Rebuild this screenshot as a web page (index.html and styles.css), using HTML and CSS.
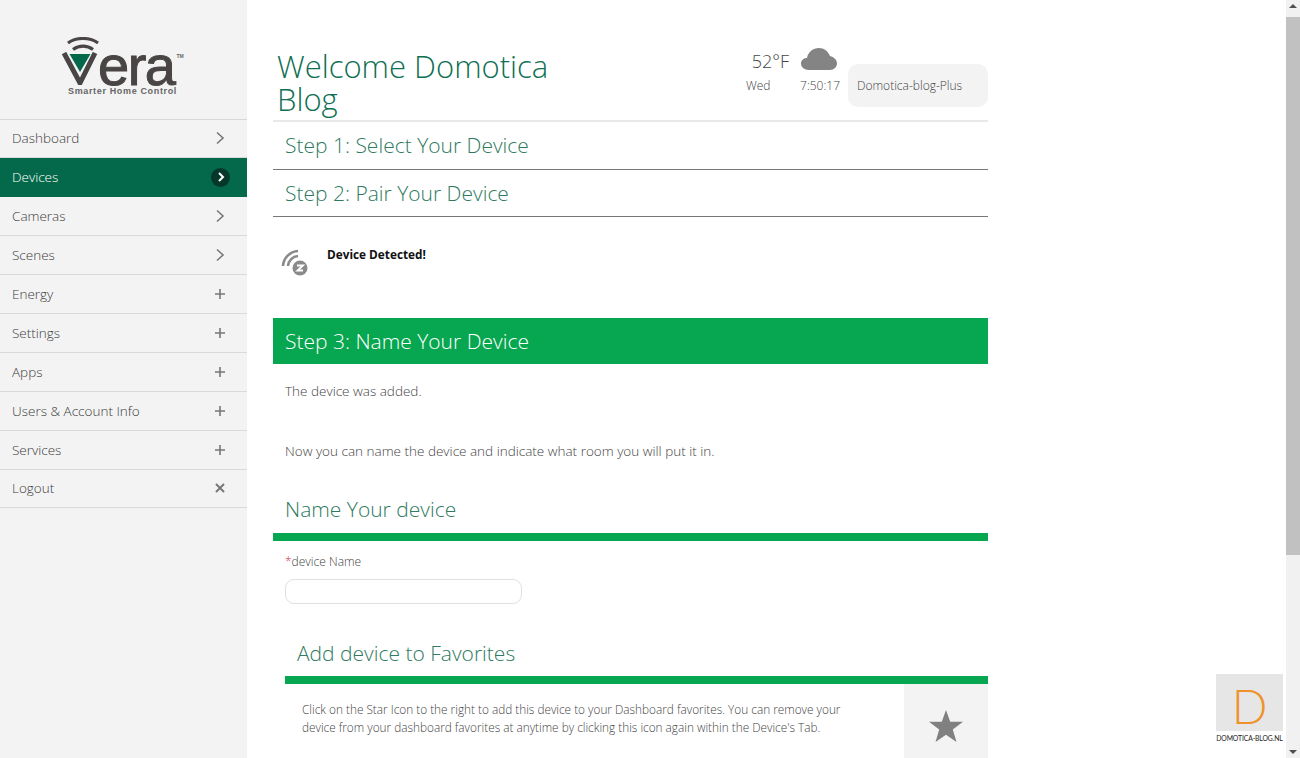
FILE: index.html
```html
<!DOCTYPE html>
<html lang="en">
<head>
<meta charset="utf-8">
<title>Vera</title>
<link rel="stylesheet" href="styles.css">
</head>
<body>
<div class="app">
  <aside class="sidebar">
    <div class="logo">
      <div class="logo-mark">
        <svg class="logo-waves" width="34" height="15" viewBox="0 0 34 15"><path d="M2 6C10 0 24 0 32 6" fill="none" stroke="#4a4545" stroke-width="3.2"/><path d="M7 12.500C13 8 21 8 27 12.500" fill="none" stroke="#4a4545" stroke-width="3.2"/></svg>
        <div class="logo-word">
          <svg class="logo-v" width="38" height="33" viewBox="0 0 38 33"><path d="M3 1L19 31L34 1" fill="none" stroke="#4a4545" stroke-width="5"/><path d="M8.500 2H29.500L19 20Z" fill="#04694a"/></svg>
          <span class="logo-text">era</span><span class="logo-tm">TM</span>
        </div>
        <div class="logo-sub">Smarter Home Control</div>
      </div>
    </div>
    <nav class="menu">
      <a class="menu-item"><span>Dashboard</span><svg width="10" height="14" viewBox="0 0 10 14"><path d="M2 1.500L8 7L2 12.500" fill="none" stroke="#777" stroke-width="1.600"/></svg></a>
      <a class="menu-item active"><span>Devices</span><span class="badge"><svg width="8" height="10" viewBox="0 0 8 10"><path d="M2 1L6 5L2 9" fill="none" stroke="#fff" stroke-width="2"/></svg></span></a>
      <a class="menu-item"><span>Cameras</span><svg width="10" height="14" viewBox="0 0 10 14"><path d="M2 1.500L8 7L2 12.500" fill="none" stroke="#777" stroke-width="1.600"/></svg></a>
      <a class="menu-item"><span>Scenes</span><svg width="10" height="14" viewBox="0 0 10 14"><path d="M2 1.500L8 7L2 12.500" fill="none" stroke="#777" stroke-width="1.600"/></svg></a>
      <a class="menu-item"><span>Energy</span><svg width="10" height="10" viewBox="0 0 10 10"><path d="M5 0V10M0 5H10" stroke="#777" stroke-width="1.600"/></svg></a>
      <a class="menu-item"><span>Settings</span><svg width="10" height="10" viewBox="0 0 10 10"><path d="M5 0V10M0 5H10" stroke="#777" stroke-width="1.600"/></svg></a>
      <a class="menu-item"><span>Apps</span><svg width="10" height="10" viewBox="0 0 10 10"><path d="M5 0V10M0 5H10" stroke="#777" stroke-width="1.600"/></svg></a>
      <a class="menu-item"><span>Users &amp; Account Info</span><svg width="10" height="10" viewBox="0 0 10 10"><path d="M5 0V10M0 5H10" stroke="#777" stroke-width="1.600"/></svg></a>
      <a class="menu-item"><span>Services</span><svg width="10" height="10" viewBox="0 0 10 10"><path d="M5 0V10M0 5H10" stroke="#777" stroke-width="1.600"/></svg></a>
      <a class="menu-item"><span>Logout</span><svg width="10" height="10" viewBox="0 0 10 10"><path d="M1 1L9 9M9 1L1 9" stroke="#777" stroke-width="2"/></svg></a>
    </nav>
  </aside>

  <main class="content">
    <header class="header">
      <h1 class="welcome">Welcome Domotica Blog</h1>
      <div class="status">
        <div class="weather">
          <div class="weather-top">
            <span class="temp">52°F</span>
            <svg width="36" height="24" viewBox="0 0 36 24"><path d="M8 23C3 23 0 20 0 16.500C0 13 3 11 6 11C7 5 12 1 18 1C23 1 27 4 29 9C33 10 36 13 36 16.500C36 20 33 23 29 23Z" fill="#848484"/></svg>
          </div>
          <div class="weather-bottom"><span>Wed</span><span>7:50:17</span></div>
        </div>
        <div class="unit-name">Domotica-blog-Plus</div>
      </div>
    </header>

    <h2 class="step">Step 1: Select Your Device</h2>
    <h2 class="step">Step 2: Pair Your Device</h2>

    <div class="detected">
      <svg width="28" height="28" viewBox="0 0 28 28">
        <path d="M3 18A16 16 0 0 1 18 3" fill="none" stroke="#8a8a8a" stroke-width="2.600"/>
        <path d="M8 18A11 11 0 0 1 18 8" fill="none" stroke="#8a8a8a" stroke-width="2.600"/>
        <circle cx="20" cy="20" r="7.500" fill="#8a8a8a"/>
        <path d="M17 17.500H23L17.500 22.500H23" fill="none" stroke="#fff" stroke-width="1.800"/>
      </svg>
      <strong>Device Detected!</strong>
    </div>

    <h2 class="step-active">Step 3: Name Your Device</h2>
    <p class="added">The device was added.</p>
    <p class="instruction">Now you can name the device and indicate what room you will put it in.</p>

    <h3 class="section-title">Name Your device</h3>
    <label class="field-label"><span class="req">*</span>device Name</label>
    <input class="text-input" type="text">

    <section class="favorites">
      <h3 class="section-title fav-title">Add device to Favorites</h3>
      <div class="fav-row">
        <p>Click on the Star Icon to the right to add this device to your Dashboard favorites. You can remove your device from your dashboard favorites at anytime by clicking this icon again within the Device's Tab.</p>
        <div class="fav-star">
          <svg width="36" height="34" viewBox="0 0 36 34"><path d="M18 1L22.200 12.700H35L24.800 20.400L28.500 33L18 25.700L7.500 33L11.200 20.400L1 12.700H13.800Z" fill="#808080"/></svg>
        </div>
      </div>
    </section>
  </main>

  <div class="scrollbar">
    <span class="arrow-up"></span>
    <span class="thumb"></span>
    <span class="arrow-down"></span>
  </div>
</div>

<div class="watermark">
  <span class="wm-letter">D</span>
  <span class="wm-text">DOMOTICA-BLOG.NL</span>
</div>
</body>
</html>
```

FILE: styles.css
```css
* { box-sizing: border-box; }
html, body { margin: 0; height: 100%; overflow: hidden; background: #fff; }
body { font-family: "Open Sans", sans-serif; font-weight: 300; color: #333; }

.app { display: flex; width: 1300px; height: 758px; overflow: hidden; }

.sidebar { flex: 0 0 247px; background: #f3f3f3; }
.logo { height: 119.500px; padding: 37px 0 0 61px; border-bottom: 1px solid #d8d8d8; }
.logo-mark { width: 124px; }
.logo-waves { display: block; margin-left: 5px; }
.logo-word { display: flex; align-items: flex-start; height: 33px; }
.logo-v { flex: none; }
.logo-text { height: 33px; font-family: "Liberation Sans", sans-serif; font-weight: 400; font-size: 56px; line-height: 33px; color: #4a4545; letter-spacing: -1.500px; -webkit-text-stroke: 1px #4a4545; margin: -3px 0 0 -1px; }
.logo-tm { font-family: "Liberation Sans", sans-serif; font-size: 5px; font-weight: 700; color: #666; line-height: 8px; margin-left: 2px; }
.logo-sub { font-family: "Liberation Sans", sans-serif; font-weight: 700; font-size: 9px; line-height: 11px; letter-spacing: .65px; color: #666; margin: 1px 0 0 7px; white-space: nowrap; }

.menu-item { display: flex; align-items: center; justify-content: space-between; height: 38.900px; padding: 0 22px 0 12px; border-bottom: 1px solid #d9d9d9; font-size: 13.500px; color: #3c3c3c; }
.menu-item.active { background: #04694a; color: #fff; border-bottom-color: #04694a; padding-right: 17px; }
.badge { display: flex; align-items: center; justify-content: center; width: 19px; height: 19px; border-radius: 50%; background: #06382a; }

.content { flex: 0 0 741px; padding: 0 0 0 26px; min-width: 0; }
.content > * { width: 715px; }

.header { display: flex; justify-content: space-between; align-items: flex-end; height: 122px; padding-bottom: 4px; border-bottom: 2px solid #e8e8e8; }
.welcome { margin: 0 0 0 4px; width: 300px; font-size: 31px; line-height: 33px; font-weight: 300; color: #0f6f52; }
.status { display: flex; align-items: flex-end; gap: 8px; margin-bottom: 9px; }
.weather { width: 94px; color: #444; margin-bottom: 13px; }
.weather-top { display: flex; justify-content: flex-end; align-items: center; gap: 12px; margin: 0 3px 0 0; height: 30px; }
.temp { font-size: 18px; line-height: 24px; margin-top: 4px; }
.weather-bottom { display: flex; justify-content: space-between; font-size: 12px; line-height: 17px; margin-top: 3px; }
.unit-name { display: flex; align-items: center; width: 140px; height: 43px; padding-left: 9px; background: #f3f3f3; border-radius: 10px; font-size: 12px; color: #444; }

.step { margin: 0; height: 47.500px; padding-left: 12px; font-size: 21px; font-weight: 300; line-height: 47px; color: #2f7a60; border-bottom: 1px solid #777; }

.detected { display: flex; align-items: flex-start; height: 101px; padding: 30px 0 0 7px; }
.detected svg { flex: none; margin-top: 1px; }
.detected strong { margin: -1px 0 0 19px; font-size: 11.800px; line-height: 17px; font-weight: 700; color: #111; }

.step-active { margin: 0; height: 46px; padding-left: 12px; background: #07a650; color: #fff; font-size: 21px; font-weight: 300; line-height: 46px; }
.added, .instruction { margin: 0; padding-left: 12px; font-size: 13.500px; line-height: 20px; color: #444; }
.added { padding-top: 17px; height: 57px; }
.instruction { padding-top: 20px; height: 60px; }

.section-title { margin: 0; height: 60px; padding: 13px 0 0 12px; font-size: 21px; line-height: 30px; font-weight: 300; color: #2f7a60; border-bottom: 8px solid #07a650; }
.field-label { display: block; padding: 12px 0 0 12px; font-size: 12px; line-height: 17px; color: #444; }
.req { color: #d9435c; }
.text-input { display: block; width: 237px !important; height: 25px; margin: 9px 0 0 12px; border: 1px solid #e0e0e0; border-radius: 9px; background: #fff; }

.favorites { margin-top: 18px; padding-left: 12px; }
.fav-title { height: 62px; padding-top: 16px; }
.fav-row { display: flex; justify-content: space-between; }
.fav-row p { margin: 0; width: 560px; padding: 16px 0 0 17px; font-size: 11.800px; line-height: 18px; color: #444; box-sizing: content-box; }
.fav-star { display: flex; justify-content: center; width: 84px; height: 80px; padding-top: 25px; background: #f3f3f3; }

.scrollbar { flex: 0 0 14px; margin-left: auto; display: flex; flex-direction: column; align-items: center; background: #f1f1f1; }
.thumb { display: block; width: 14px; height: 538px; margin-top: 9px; background: #c1c1c1; }
.arrow-up, .arrow-down { display: block; width: 0; height: 0; border-left: 4px solid transparent; border-right: 4px solid transparent; }
.arrow-up { margin-top: 4px; border-bottom: 4px solid #505050; }
.arrow-down { margin-top: auto; margin-bottom: 4px; border-top: 4px solid #505050; }

.watermark { position: absolute; left: 1216px; top: 674px; width: 67px; height: 69px; background: #fff; text-align: center; }
.wm-letter { display: block; height: 57px; padding-top: 7px; background: #e6e6e6; font-family: "Lato", sans-serif; font-weight: 300; font-size: 47px; line-height: 50px; color: #f0922c; }
.wm-text { display: block; margin-top: 3px; font-family: "Lato", sans-serif; font-size: 6.800px; line-height: 8px; font-weight: 400; color: #222; white-space: nowrap; letter-spacing: -.1px; }
```
